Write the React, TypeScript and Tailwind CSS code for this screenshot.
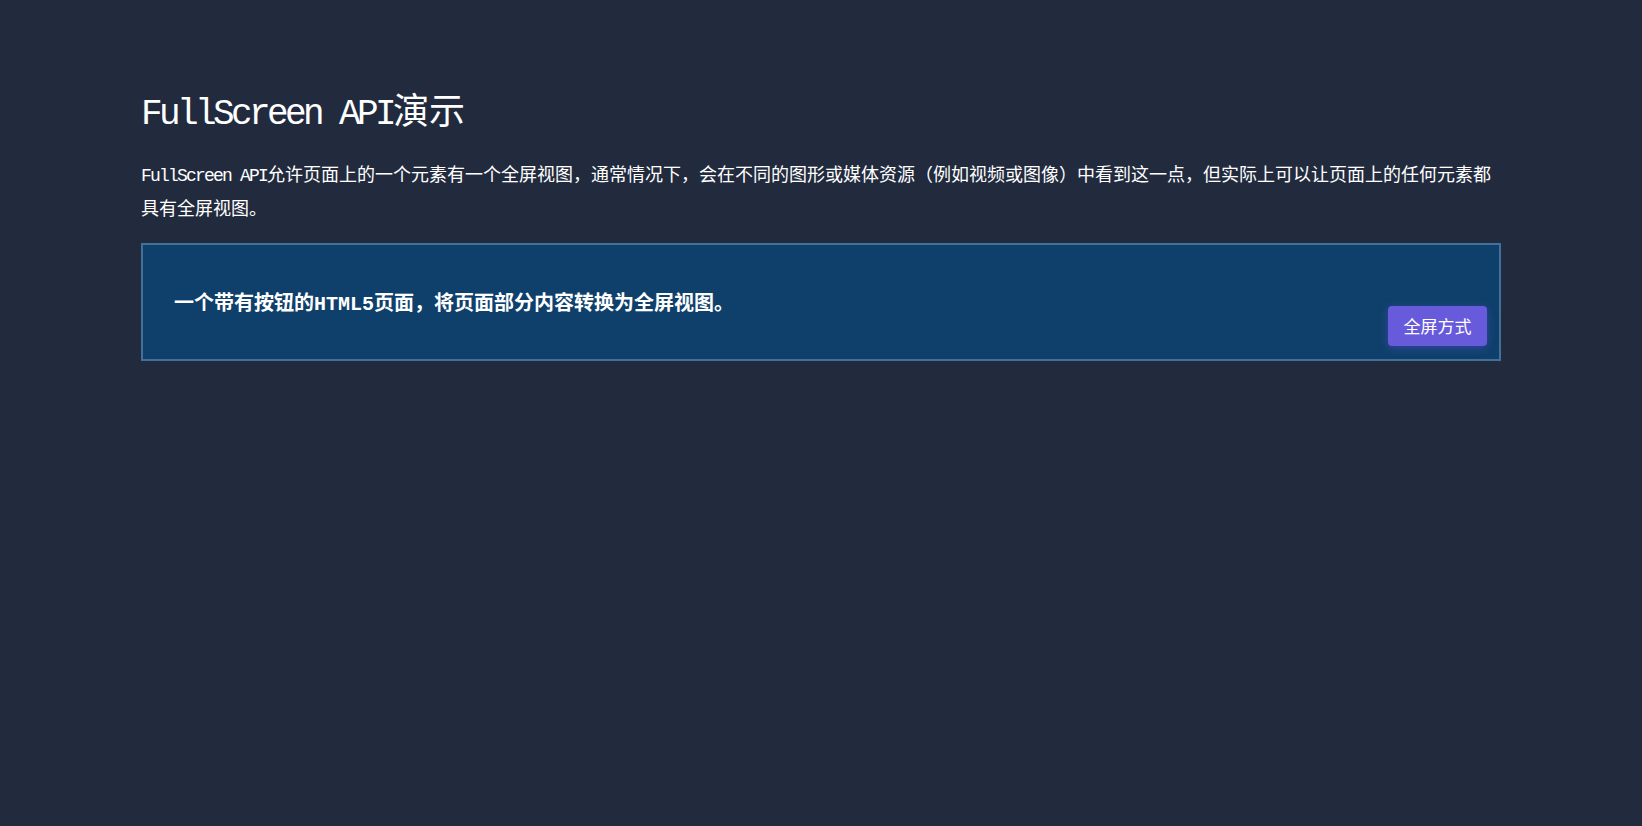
export default function App() {
  const font = 'font-["Liberation_Mono","Noto_Sans_CJK_SC",monospace]';
  return (
    <div className={`min-h-screen bg-[#222b3e] text-white ${font}`}>
      <div className="mx-auto w-[1360px] pt-[95px]">
        {/* Title */}
        <h1 className="text-[36px] leading-[40px] font-normal">
          <span className="tracking-[-0.1em]">FullScreen API</span>演示
        </h1>

        {/* Intro */}
        <p className="mt-[24px] text-[18px] leading-[34px]">
          <span className="tracking-[-0.1em]">FullScreen API</span>
          允许页面上的一个元素有一个全屏视图，通常情况下，会在不同的图形或媒体资源（例如视频或图像）中看到这一点，但实际上可以让页面上的任何元素都具有全屏视图。
        </p>

        {/* Demo box */}
        <div className="mt-[16px] flex items-end justify-between border-2 border-[#42709a] bg-[#0f406b] pt-[46px] pb-[13px] pl-[31px] pr-3">
          <h3 className="mb-[27px] text-[20px] leading-[28px] font-bold">
            一个带有按钮的HTML5页面，将页面部分内容转换为全屏视图。
          </h3>
          <button className="h-10 w-[99px] rounded bg-[#675bdc] text-[17px] text-white shadow-[0_2px_8px_rgba(90,80,220,0.45)] font-['Noto_Sans_CJK_SC',sans-serif]">
            全屏方式
          </button>
        </div>
      </div>
    </div>
  );
}
